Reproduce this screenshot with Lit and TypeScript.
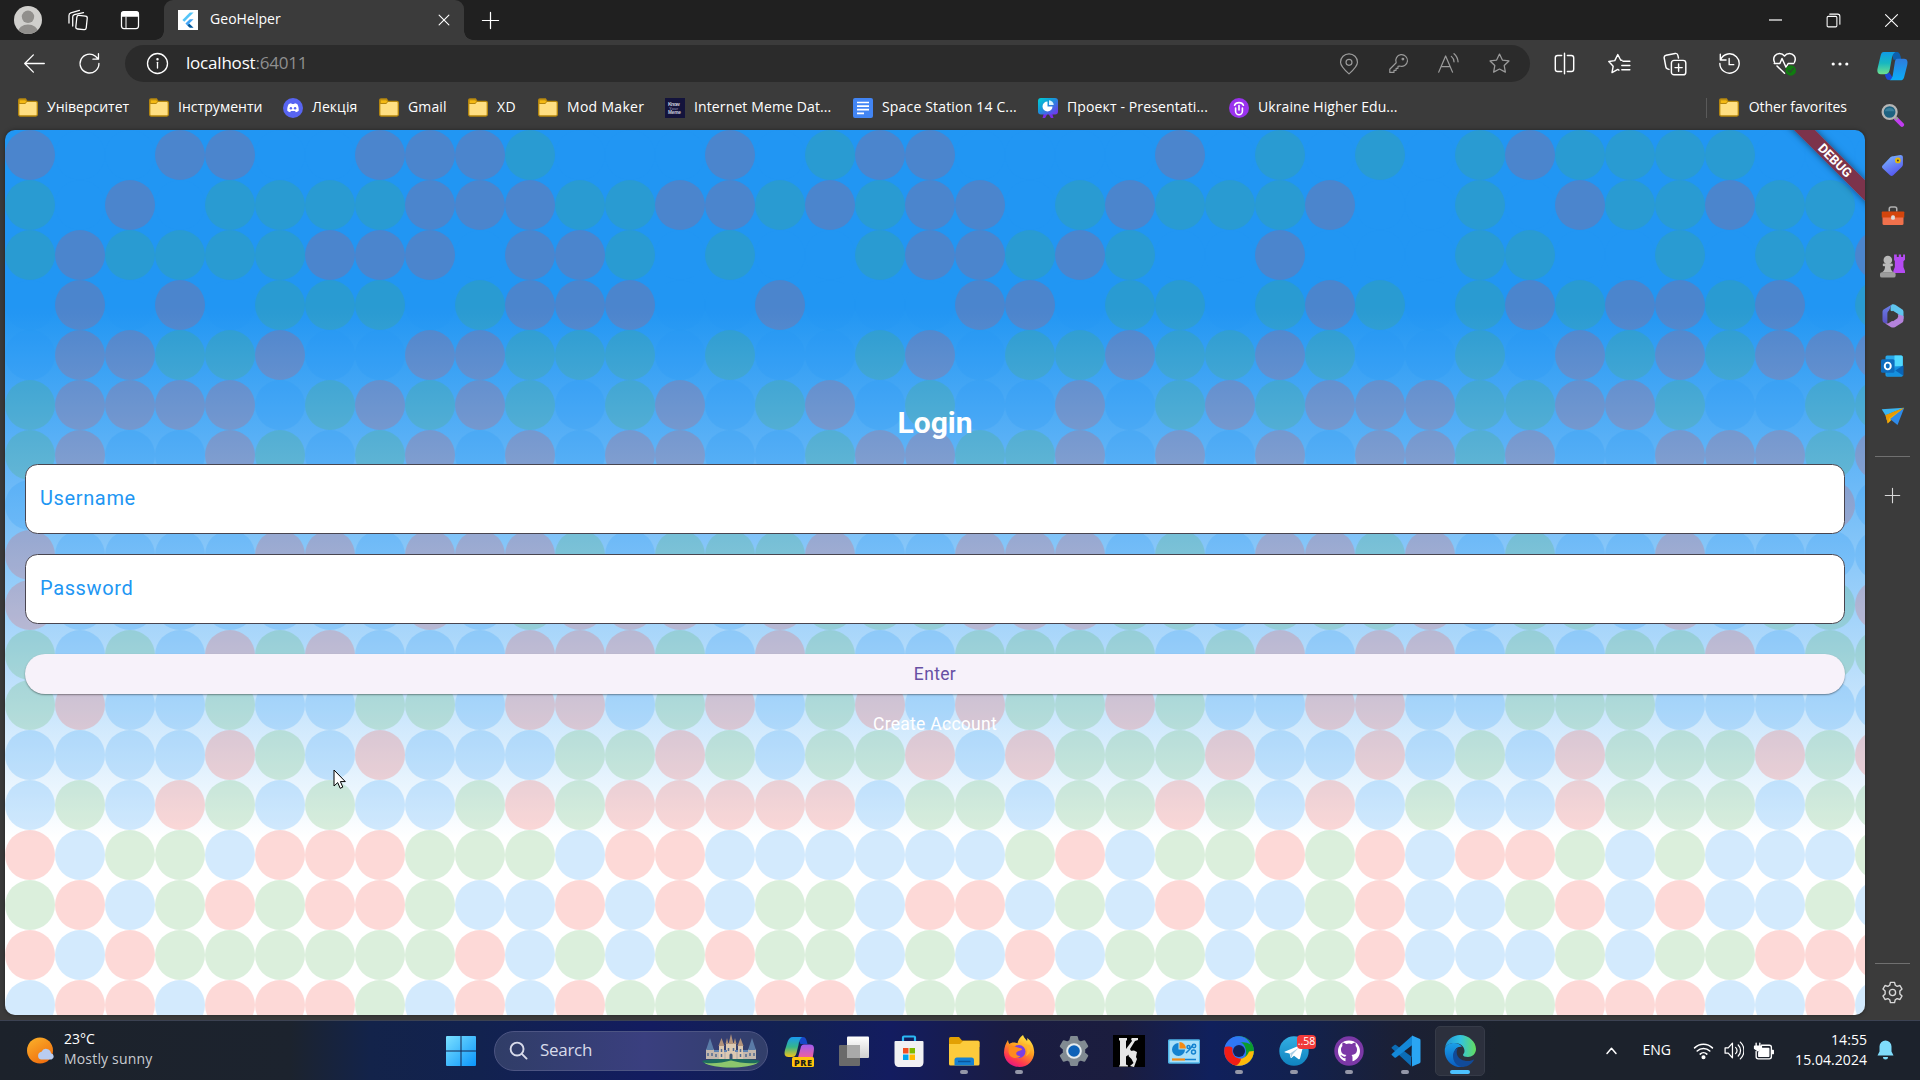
import { LitElement, html, css, svg, TemplateResult } from "lit";
import { customElement, property } from "lit/decorators.js";
import { classMap } from "lit/directives/class-map.js";

/* ---------- background dots: one character per circle ---------- */
const DOTS: string[] = [
  "RBBRRBBRRRGBBBRBGRR" + "BBBBRBGBGBGRGGGGBBB",
  "GBRBGGGGRRRGGRRGRGR" + "RBGRGGGRBBGBRGGRGGB",
  "GRGGGGRRRBRRGBGBBGR" + "RGRGBBRBBBGGBBGBGGR",
  "BRBRBGGGBGRRRBBRBBB" + "RRBGGBGRGBGRGRRGRBG",
  "BRRGGRBBRRGGGBGBBGR" + "BGGRGGRGBBGBRGRGRRR",
  "GRRRRBGRGRGBGRBGRBG" + "BBRBGRGRRRGGRRGBBGG",
  "GRBBRGBGRBRBRRBBGRR" + "GGRBRBRBRRGRBBRRRGR",
  "BBBBBBBBBBBBBBBBBBB" + "BBBBBBBBBBBBBBBBBRB",
  "RBBBBRRBRRRGBGGGRBB" + "RRRBGBRRGRBGBBRBBBB",
  "RBBBBBBBRBGRRRBRGGG" + "RRRGGBGGGRBGGBRBGGR",
  "GBGBRGRBBBRRRGBRGBB" + "GGGGBGRBRRBGBGGRBGG",
  "GRBBGBBGGBRRBGRBGRB" + "RGGRGBBRRBBGGGBBBBB",
  "BBBBRGBRBBBGGRGBGGR" + "BRGGGRBBRBGBRGGGRGR",
  "BGBRGBGBBGRGRRRRRBG" + "GBGGRGBRBGBBRGGGBGG",
  "RBGGBRRRGGGBRRBBBBB" + "BGRBGGRGRBRRGBGBBBG",
  "GRBGRGRRGBBRBRBGGBR" + "RBGBRBBGRBBGRBRBBGB",
  "RBRGGGGGGRBGBGRGGBG" + "BRBGGBGGRBBBGBGGRRR",
  "BRRBRRRGBRBRGGBRRBG" + "GRGGBRGGRGGGRRRBBRB",
];

/* ---------- icons ---------- */
const line = (size: number, body: TemplateResult, w = 1.1) => html`<svg
  width=${size} height=${size} viewBox="0 0 20 20" fill="none"
  stroke="currentColor" stroke-width=${w} stroke-linecap="round" stroke-linejoin="round">${body}</svg>`;
const art = (size: number, body: TemplateResult) => html`<svg
  width=${size} height=${size} viewBox="0 0 32 32">${body}</svg>`;

const STAR = "M10 1.8l2.5 5.2 5.7.8-4.1 4 1 5.7-5.1-2.7-5.1 2.7 1-5.7-4.1-4 5.700-.8z";
const GEAR = "M8.2 1.2h3.6l.6 2.5 1.6.9 2.5-.7 1.8 3.1-1.9 1.8v2.4l1.9 1.8-1.8 3.1-2.5-.7-1.6.9-.6 2.5H8.2l-.6-2.5-1.6-.9-2.5.7-1.8-3.1 1.9-1.8V8.8L1.7 7l1.8-3.1 2.5.7 1.6-.9z";

const folder = html`<svg width="20" height="20" viewBox="0 0 20 20">
  <path d="M.7 2.300a1.300 1.300 0 0 1 1.300-1.300h5.500l1.500 2.300H17.800a1.500 1.500 0 0 1 1.500 1.500v11.700a1.500 1.500 0 0 1-1.500 1.500H2.200a1.500 1.500 0 0 1-1.500-1.500z" fill="#ffdf82" stroke="#b5860d" stroke-width="1.300"/>
  <path d="M1.200 1.800h6.300l1.200 1.700-1.400 2H1.200z" fill="#f5b914" stroke="#b5860d" stroke-width="1"/></svg>`;
const discord = html`<svg width="20" height="20" viewBox="0 0 20 20"><circle cx="10" cy="10" r="10" fill="#5865f2"/>
  <path d="M5.600 6.300c1-.7 1.900-.9 2.700-1l.4.700h2.600l.4-.7c.8.100 1.700.3 2.700 1 1 1.900 1.500 4 1.300 6.500-.9.700-1.900 1.200-2.900 1.400l-.7-1.100H7.900l-.7 1.100c-1-.2-2-.7-2.900-1.400-.2-2.500.3-4.600 1.300-6.500z" fill="#fff"/>
  <circle cx="7.900" cy="10.200" r="1.200" fill="#5865f2"/><circle cx="12.100" cy="10.200" r="1.200" fill="#5865f2"/></svg>`;
const meme = html`<svg width="20" height="20" viewBox="0 0 20 20"><rect width="20" height="20" fill="#13133c"/>
  <g fill="#c9c9dc" font-family="Liberation Sans" font-weight="700" font-size="5.200"><text x="3" y="7.500" textLength="12">Know</text><text x="4" y="11.800" fill="#77779a" font-size="4">Your</text><text x="3" y="16" textLength="13" font-size="4.800">Meme</text></g></svg>`;
const docs = html`<svg width="20" height="20" viewBox="0 0 20 20"><rect width="20" height="20" rx="2" fill="#4285f4"/>
  <path d="M4 4.500h12M4 8.100h12M4 11.700h12M4 15.300h7" stroke="#fff" stroke-width="1.700"/></svg>`;
const pres = html`<svg width="20" height="20" viewBox="0 0 20 20"><defs><linearGradient id="p" x1="0" y1="0" x2="1" y2="1"><stop offset="0" stop-color="#00d0d6"/><stop offset=".4" stop-color="#1599d8"/><stop offset="1" stop-color="#7b2cf0"/></linearGradient></defs>
  <path d="M6 15l-1.500 5h2.600L10 15l2.900 5h2.600L14 15z" fill="#7a2be8"/><rect width="20" height="16.500" rx="3" fill="url(#p)"/>
  <path d="M9.500 3.500a5 5 0 1 0 5 5h-5z" fill="#fff"/><path d="M11 2.200v4.800h4.700A4.800 4.800 0 0 0 11 2.200z" fill="#d8f4ff"/></svg>`;
const ukr = html`<svg width="20" height="20" viewBox="0 0 20 20"><circle cx="10" cy="10" r="10" fill="#9a32ee"/>
  <path d="M6.600 10v3.300a3.400 3.400 0 0 0 6.800 0V10" stroke="#fff" stroke-width="1.600" fill="none" stroke-linecap="round"/><path d="M5.600 7.200a4.600 3.600 0 0 1 8.800 0M10 7.500v4.500" stroke="#fff" stroke-width="1.600" fill="none" stroke-linecap="round"/></svg>`;
const flutter = html`<svg width="20" height="20" viewBox="0 0 20 20"><rect width="20" height="20" fill="#fff"/>
  <path d="M11.800 2.500h3.800L6.300 11.800 4.400 9.900z" fill="#54c5f8"/><path d="M11.800 9.200h3.800L11.200 13.500l-1.900 1.900-1.900-1.900z" fill="#42a5f5"/><path d="M9.300 15.400l1.900-1.900 4.400 4.300h-3.800z" fill="#01579b"/></svg>`;

const avatar = html`<svg width="28" height="28" viewBox="0 0 28 28"><defs><clipPath id="av"><circle cx="14" cy="14" r="14"/></clipPath></defs>
  <g clip-path="url(#av)"><rect width="28" height="28" fill="#d0cfcc"/><circle cx="14" cy="10.800" r="6.200" fill="#918f8c"/><ellipse cx="14" cy="26" rx="10" ry="7.500" fill="#918f8c"/></g></svg>`;
const workspaces = line(22, svg`<rect x="8.500" y="6" width="9.500" height="12.500" rx="1.800" transform="rotate(6 13 12)"/><path d="M5.200 15.500V7.200a2.200 2.200 0 0 1 1.500-2.100L15 3.200M1.800 12.800V6A2.400 2.400 0 0 1 3.500 3.600l7.800-2.300"/>`, 1.15);
const tabMenu = line(20, svg`<rect x="1.500" y="1.500" width="17" height="17" rx="2.500"/><path d="M2 3a1 1 0 0 1 1-1h14a1 1 0 0 1 1 1v3H2z" fill="currentColor"/><path d="M6 7v11" stroke-width="1"/>`, 1.25);
const closeX = (s: number, w = 1.6) => line(s, svg`<path d="M3 3l14 14M17 3L3 17"/>`, w);
const plus = (s: number) => line(s, svg`<path d="M10 1.500v17M1.500 10h17"/>`, 1.3);
const back = line(23, svg`<path d="M18.500 10H1.800M9 2.500L1.500 10 9 17.500"/>`, 1.15);
const reload = line(23, svg`<path d="M18.200 10a8.200 8.200 0 1 1-3-6.300L17.600 6M17.800 1.500V6.200H13"/>`, 1.15);
const info = line(23, svg`<circle cx="10" cy="10" r="8.700"/><path d="M10 9v5"/><circle cx="10" cy="6.300" r=".5" fill="currentColor"/>`, 1.15);
const pin = line(22, svg`<path d="M10 19c-4.500-4-7.700-7-7.700-10.600a7.700 7.700 0 0 1 15.400 0C17.700 12 14.500 15 10 19z"/><circle cx="10" cy="8.500" r="2.700"/>`);
const key = line(21, svg`<path d="M7.800 9.300A5.600 5.600 0 1 1 11 12.400l-1.500.2v2H7.700v1.900H5.700V18.500H1.700v-3z"/><circle cx="14.200" cy="5.800" r=".8"/>`);
const readAloud = line(23, svg`<path d="M1.500 17.500L7.500 3.500l6 14M3.700 12.800h7.600M12.500 3.800a6.500 6.500 0 0 1 2.300 4.700M14.800 1.500a10 10 0 0 1 3.500 7"/>`);
const star = line(23, svg`<path d=${STAR}/>`);
const split = line(23, svg`<path d="M7.500 3H4a2 2 0 0 0-2 2v10a2 2 0 0 0 2 2h3.500M12.500 3H16a2 2 0 0 1 2 2v10a2 2 0 0 1-2 2h-3.500M10 1v18"/>`, 1.25);
const favList = line(23, svg`<path d="M9.500 15.800l-1-.6-5 2.700 1-5.600L.7 8.300l5.200-.8 2.600-5.300 2.600 5h1M13 8h6M12 11.700h7M12 15.400h7"/>`, 1.25);
const collections = line(24, svg`<rect x="7" y="7" width="12" height="12" rx="2.200"/><path d="M13 10v6M10 13h6M5 14.500L3.700 14a2 2 0 0 1-1.300-1.500L1 5a2 2 0 0 1 1.600-2.300l7.500-1.500a2 2 0 0 1 2.300 1.600L12.900 5"/>`, 1.2);
const history = line(23, svg`<path d="M2 2v5h5M2.300 6.600A8.400 8.400 0 1 1 1.600 10M9.700 5.700v5.300h4"/>`, 1.2);
const health = line(25, svg`<path d="M2 9C0 4.500 3.500 2 6 2s4 2 4 2 1.500-2 4-2 6 2.500 4 7M1.800 10h4.500L8 6l3.200 7 1.700-3h4.500M4 12l6 5.800"/><circle cx="15" cy="15.500" r="4.200" fill="#107c10" stroke="none"/><path d="M13 15.500l1.500 1.500 2.600-3" stroke="#2c4d2c"/>`, 1.2);
const dots = html`<svg width="18" height="6" viewBox="0 0 18 6" fill="#fff"><circle cx="2.200" cy="3" r="1.600"/><circle cx="9" cy="3" r="1.600"/><circle cx="15.800" cy="3" r="1.600"/></svg>`;
const minimize = html`<svg width="13" height="2" viewBox="0 0 13 2"><rect width="13" height="1.200" y=".4" fill="#fff"/></svg>`;
const restore = line(15, svg`<rect x="1.500" y="4.500" width="13" height="14" rx="1.500"/><path d="M5 1.500h10.500a3 3 0 0 1 3 3V15"/>`, 1.4);

const copilotBody = svg`<defs><linearGradient id="c1" x1="0" y1="0" x2="0" y2="1"><stop offset="0" stop-color="#0f9be8"/><stop offset=".5" stop-color="#17b7c0"/><stop offset="1" stop-color="#6fe08e"/></linearGradient><linearGradient id="c2" x1="0" y1="0" x2="0" y2="1"><stop offset="0" stop-color="#2f7bdc"/><stop offset="1" stop-color="#0aaef8"/></linearGradient></defs>
  <path d="M15 2h5c3 0 3.500 2 4.500 5l.5 3h-8z" fill="#0d5fae"/><path d="M7 2h12c-2 1-3 3-3.800 7L13 21c-.8 3-2 4-4 4H4c-3.500 0-4.200-3-3.300-6.500L3.700 6c.8-3 1.500-4 3.300-4z" fill="url(#c1)"/>
  <path d="M8 25c2 0 3.500-.5 4.500-2l5 7.500-2 .5h-3c-2.500 0-3.500-2-4.500-6z" fill="#1b49d6"/><path d="M21 9h7c3.500 0 4 3 3.200 6.500L28 28c-.8 2.500-2 3.300-4 3.300H13c2-1 3-3 3.500-6.500L18.500 12c.5-2 1-3 2.500-3z" fill="url(#c2)"/>`;

const sideIcons: TemplateResult[] = [
  art(24, svg`<path d="M20 21l8 8" stroke="#c13cf0" stroke-width="5.500" stroke-linecap="round"/><path d="M17 17l5 5" stroke="#999" stroke-width="4"/><circle cx="11.500" cy="12" r="9.300" fill="#1e6281" stroke="#b5b5b5" stroke-width="3"/><path d="M5 11a7 7 0 0 1 13 0z" fill="#3a7f9c"/>`),
  art(23, svg`<defs><linearGradient id="t" x1="0" y1="0" x2=".5" y2="1"><stop offset="0" stop-color="#7fc0ff"/><stop offset="1" stop-color="#5558f0"/></linearGradient></defs><path d="M17 3l10-1.500c2 0 3.500 1 3.500 3.500v9c0 2-.5 3-2 4.500L17 29.500c-1.500 1.500-3 1.500-4.500 0L2.500 20c-1.500-1.500-1.500-3 0-4.500L13 4.500C14.500 3.300 15.500 3.200 17 3z" fill="url(#t)"/><circle cx="23.500" cy="9" r="2.700" fill="#3b3b3b" stroke="#e5b80b" stroke-width="2.600"/>`),
  art(24, svg`<path d="M11 10V6.500C11 5 12 4 13.500 4h5C20 4 21 5 21 6.500V10" fill="none" stroke="#b0b0b0" stroke-width="2"/><path d="M2 14h28v12a2 2 0 0 1-2 2H4a2 2 0 0 1-2-2z" fill="#f0714c"/><path d="M2 10h28a1 1 0 0 1 1 1v7H1v-7a1 1 0 0 1 1-1z" fill="#d4450c"/><rect x="13.500" y="15" width="5" height="6" rx="2" fill="#ddd"/>`),
  art(25, svg`<path d="M18 2h3.500v3H24V2h3v3h2.500V2h2.500v6.500l-2 2V18l2 5v2.500H17V23l2-5v-7.500l-1-2z" fill="#b44bf2"/><g fill="#b8b8b8"><circle cx="10" cy="9" r="5.500"/><rect x="3.500" y="13.500" width="13" height="3.500" rx="1.500"/><path d="M6.500 15h7c0 6 1 7.500 4 10H2.500c3-2.500 4-4 4-10z"/></g><rect x="0" y="24.500" width="20" height="7" rx="2.500" fill="#9c9c9c"/>`),
  art(24, svg`<defs><linearGradient id="m" x1="0" y1="0" x2="0" y2="1"><stop offset="0" stop-color="#6a80e8"/><stop offset="1" stop-color="#5b4dc0"/></linearGradient></defs><path d="M14 1L4 7C2.500 8 2 9 2 11v10c0 2 .5 3 2 4l5 2c-1-2-.5-3-.5-5V13c0-2 .8-3 2-4z" fill="url(#m)"/><path d="M14 1c2-1 3-.8 5 0l9 6c1.500 1 2 2 2 4v9l-8-7-9-4c-.5-3-.5-5 1-8z" fill="#5fc5ee"/><path d="M30 16v5c0 2-.5 3-2 4l-9 5.500c-2 1-4 1-6 0L5 25.500c2 1 4 .8 6-.5l11-7c1.500-1 1-3 0-4.500z" fill="#b583dc"/><path d="M10.500 12.500l5.500-3.500 6 4v6l-6 4-5.500-3.500z" fill="#3b3b3b"/>`),
  art(24, svg`<rect x="6" y="2" width="23" height="28" rx="2" fill="#28a8ea"/><path d="M18 2h9a2 2 0 0 1 2 2v12H18z" fill="#50d9ff"/><path d="M7 20l22-4v12a2 2 0 0 1-2 2H9a2 2 0 0 1-2-2z" fill="#1490df"/><path d="M30 15v14l-11-7z" fill="#0a63b5"/><rect x="0" y="7" width="18" height="18" rx="2" fill="#0f6cbd"/><ellipse cx="9" cy="16" rx="4" ry="4.500" fill="none" stroke="#fff" stroke-width="2.600"/>`),
  art(24, svg`<path d="M1 7L31 5 6 15z" fill="#3bb5f0"/><path d="M6 15L31 5 9 26z" fill="#f8b40a"/><path d="M12 20L31 5 22 28z" fill="#2f8bea"/><path d="M6 15l25-10-20 14-2 7z" fill="#e79a06"/>`),
];

/* ---------- taskbar applications ---------- */
const winLogo = html`<svg width="30" height="30" viewBox="0 0 30 30"><defs><linearGradient id="w" x1="0" y1="0" x2="1" y2="1"><stop offset="0" stop-color="#7be0ff"/><stop offset="1" stop-color="#0a95fb"/></linearGradient></defs><path d="M1 0h13.500v14.500H0V1a1 1 0 0 1 1-1zM15.500 0H29a1 1 0 0 1 1 1v13.500H15.500zM0 15.500h14.500V30H1a1 1 0 0 1-1-1zM15.500 15.500H30V29a1 1 0 0 1-1 1H15.500z" fill="url(#w)"/></svg>`;
const castle = html`<svg width="58" height="34" viewBox="0 0 58 34">
  <path d="M0 27c6-3 52-3 58 0-2 4-16 6.500-29 6.500S2 31 0 27z" fill="#1d6a5f"/><path d="M2 28.500c8 2 19 0 27-2 8 2 19 4 27 2-4 3.500-16 5-27 5S6 32 2 28.500z" fill="#8cc66d"/>
  <path d="M4 15h8v10H4zM46 15h8v10h-8zM12 17h34v8H12z" fill="#c4b8ae"/><path d="M17 11h5v14h-5zM36 11h5v14h-5zM24 9h10v16H24z" fill="#dcc9b2"/>
  <path d="M8 4l4 12H4zM50 4l4 12h-8z" fill="#5a7ba6"/><path d="M19.500 4l3 8h-6zM38.500 4l3 8h-6zM29 0l2.500 10h-5zM25 4l1.500 6h-3zM33 4l1.500 6h-3z" fill="#b3937c"/>
  <path d="M12 17h5M22 17h3M33 17h3M41 17h5" stroke="#5f83b2" stroke-width="2"/><path d="M6 19v3M10 19v3M14 20v3M19.500 15v3M19.500 20v3M26.500 14v3M31.500 14v3M38.500 15v3M38.500 20v3M44 20v3M48 19v3M52 19v3" stroke="#536b90" stroke-width="1.500"/><path d="M27.500 25v-4a1.500 1.500 0 0 1 3 0v4z" fill="#3e5677"/></svg>`;
const search = (s: number) => line(s, svg`<circle cx="8.500" cy="8.500" r="6.800"/><path d="M13.500 13.500l5 5"/>`, 2);

interface App { icon: TemplateResult; run?: boolean; active?: boolean; badge?: string; }
const APPS: App[] = [
  { icon: art(32, svg`<defs><linearGradient id="k1" x1="0" y1="0" x2="0" y2="1"><stop offset="0" stop-color="#1a9af0"/><stop offset=".5" stop-color="#35b58b"/><stop offset="1" stop-color="#f5c518"/></linearGradient><linearGradient id="k2" x1="0" y1="0" x2="0" y2="1"><stop offset="0" stop-color="#a05cf0"/><stop offset="1" stop-color="#f0609a"/></linearGradient></defs>
    <path d="M14 2h6c3 0 3.500 3 4.500 7h-7z" fill="#1748c8"/><path d="M10 2h9c-2 2-3 4-3.500 8l-2 8c-1 3-2 4-4.500 4H5.500c-4 0-4.500-3-3.500-7L4.500 7c1-3 2.500-5 5.500-5z" fill="url(#k1)"/><path d="M21 9.500h6c4 0 4.500 3 3.700 7l-1 6H15l2.500-9c.6-3 1.500-4 3.500-4z" fill="url(#k2)"/>
    <rect x="9" y="22" width="22" height="10" rx="1.500" fill="#ffc40c"/><text x="11" y="30.500" font-family="Open Sans" font-weight="800" font-size="9" textLength="18" fill="#1c1c1c">PRE</text>`) },
  { icon: art(32, svg`<defs><linearGradient id="v1" x1="0" y1="0" x2="0" y2="1"><stop offset="0" stop-color="#fff"/><stop offset="1" stop-color="#cfcfcf"/></linearGradient></defs><rect x="1" y="10" width="21" height="21" rx="1" fill="#6a6a6a"/><rect x="9" y="1.500" width="22" height="21.500" rx="1" fill="url(#v1)"/><rect x="9" y="10" width="13" height="13" fill="#a9a9a9"/>`) },
  { icon: art(32, svg`<path d="M10 8V2.500A1 1 0 0 1 11 1.500h10a1 1 0 0 1 1 1V8" stroke="#2ab8f5" stroke-width="2.200" fill="none"/><path d="M2.500 6h27a1 1 0 0 1 1 1v20c0 3-1.500 5-5 5h-19c-3.500 0-5-2-5-5V7a1 1 0 0 1 1-1z" fill="#f1f1f3"/><path fill="#f25022" d="M10 13h5.500v5.500H10z"/><path fill="#7fba00" d="M16.500 13H22v5.500h-5.500z"/><path fill="#00a4ef" d="M10 19.500h5.500V25H10z"/><path fill="#ffb900" d="M16.500 19.500H22V25h-5.500z"/>`) },
  { run: true, icon: art(32, svg`<path d="M1 3.500A1.500 1.500 0 0 1 2.500 2H11l3 3.500h16A1.500 1.500 0 0 1 31.500 7v5H1z" fill="#e2a003"/><path d="M1 9h11l3-3h15a1.500 1.500 0 0 1 1.500 1.500V29A1.500 1.500 0 0 1 30 30.500H2.500A1.500 1.500 0 0 1 1 29z" fill="#fccb3c"/><path d="M6.500 30.500V25a2.500 2.500 0 0 1 2.500-2.500h14.500A2.500 2.500 0 0 1 26 25v5.500z" fill="#1580d2"/><path d="M10 26.500h12.500" stroke="#0a559b" stroke-width="1.500"/>`) },
  { run: true, icon: art(32, svg`<defs><linearGradient id="f1" x1=".8" y1="0" x2=".3" y2="1"><stop offset="0" stop-color="#fff04a"/><stop offset=".45" stop-color="#ff9a1f"/><stop offset=".8" stop-color="#ff3750"/><stop offset="1" stop-color="#e31587"/></linearGradient></defs>
    <path d="M20 0c1 3 3 4 4 6 .5-1 .3-2 .2-3 4 3 7 8 7 14.500C31 26 24.500 32 16.500 32S1 26 1 17.500C1 12 3 8 5 5c.2 2 .8 3 1.500 4 1-1 2.500-1.500 4-1.500 1.500 0 3 .3 4 .8C15 5 17 2 20 0z" fill="url(#f1)"/><circle cx="16" cy="16.500" r="6.500" fill="#7b3fe4"/><path d="M6 11c4-1 6 .5 9 1.500 2 .7 4 .5 4 2-1 1.500-4 1-5.500 3-1 2 1 4 4 3.500-4 4-12 2-12-5z" fill="#ff8a1e"/><path d="M19 9c5 1 7 6 4 12 3-1 6-6 4-11z" fill="#ffb52e"/>`) },
  { icon: art(32, svg`<g transform="scale(1.6)"><path d=${GEAR} fill="#818b92" stroke="#818b92" stroke-width="1.200" stroke-linejoin="round"/></g><circle cx="16" cy="16" r="7.800" fill="#e4ebee"/><circle cx="16" cy="16" r="5.800" fill="#0d62b8"/>`) },
  { icon: art(32, svg`<rect width="32" height="32" fill="#000"/><path d="M6 3h8v2l-1 1v8l6-8-1-2 1-1h6v2l-3 1-5 8 1.500 3-2.500 2.500-3 2v8l2 1v1H6l1-2V6L6 5zM17 16l4-.5 3 1.500-1 5 1 2-3 8-4-1 3.500-3-2-4-3-3z" fill="#e6e6e6"/>`) },
  { icon: art(32, svg`<rect x=".7" y="5" width="31" height="23" rx="1" fill="#a8e0fa" stroke="#4db3e6" stroke-width="1.500"/><path d="M10.500 8a6.500 6.500 0 1 0 6.500 6.500h-6.500z" fill="#1583d0"/><path d="M11.500 7v6.500H18A6.500 6.500 0 0 0 11.500 7z" fill="#f48a14"/><path d="M18 18l4-4 3-4" stroke="#1583d0" stroke-width="1.500" fill="none"/><g fill="none" stroke="#1583d0" stroke-width="1.500"><circle cx="26" cy="11" r="1.700"/><circle cx="20.500" cy="12" r="1.500"/><circle cx="25.500" cy="17" r="2"/></g><path d="M4 24.500h13" stroke="#f48a14" stroke-width="2.200"/><path d="M17 24.500h11" stroke="#1583d0" stroke-width="1.500"/>`) },
  { run: true, icon: art(32, svg`<circle cx="16" cy="16" r="14.800" fill="#2f74f2"/><path d="M13 1.500A14.800 14.800 0 0 1 27 26c-3 1-6 .5-7-1 4-4 4-10 1-15C18 6 14 6 9 8z" fill="#0b9c2c"/><path d="M30.800 16c0 8-6.500 14.800-14.800 14.800-3 0-5-.8-7-1.800 0-3 1-5 2.500-6.500 5 3 12 1 14.500-6z" fill="#fdb90a"/><path d="M1.200 16c0 7 5 13.500 12 14.600 3-1.500 4.500-4 4.800-7-5.500.5-9.500-3.500-8.500-10.500C6 9 3 10 1.800 12z" fill="#f11d16"/><path d="M1.800 12C4 5 10 0 18 1.500c5 1 8 4 9.500 8-5-3-11-3.500-15 1-3 2-6 .5-10.700 1.500z" fill="#2f78f5"/><circle cx="16" cy="16" r="6" fill="#10215a"/>`) },
  { run: true, badge: "..58", icon: art(32, svg`<defs><linearGradient id="tg" x1="0" y1="0" x2="0" y2="1"><stop offset="0" stop-color="#33aee2"/><stop offset="1" stop-color="#0f83bf"/></linearGradient></defs><circle cx="16" cy="16" r="14.700" fill="url(#tg)"/><path d="M7 16.500L24 9.500c1-.4 1.500 0 1.300 1L22 23.500c-.2.900-1 1-1.700.5l-4.300-3.300-2.300 2.100c-.5.400-1 .3-1.100-.3l-1-4-4.500-1c-.8-.3-.8-.7-.1-1z" fill="#fff"/><path d="M12 18.500l9-6-6.500 7-.8 3.300z" fill="#a9cfe5"/>`) },
  { run: true, icon: art(32, svg`<circle cx="16" cy="16" r="14.700" fill="#7b38a6"/><path d="M16 5.500c-6.500 0-11 4.800-11 10.500 0 5 3 8.800 7.500 10.300v-3.200c-3 .5-3.500-2-5-2.700 2-.5 2.700 1.800 5 1.200.2-.7.500-1.200 1-1.500-3.600-.5-5.500-2-5.500-5.500 0-1.500.5-2.800 1.400-3.700-.3-1-.2-2.300.3-3.400 1.300 0 2.600.8 3.500 1.500a10 10 0 0 1 5.600 0c.9-.7 2.200-1.500 3.500-1.500.5 1.100.6 2.400.3 3.400.9.900 1.400 2.200 1.400 3.700 0 3.500-1.900 5-5.500 5.500.7.600 1 1.500 1 2.500v3.700C24 24.800 27 21 27 16c0-5.700-4.500-10.500-11-10.500z" fill="#fff"/>`) },
  { run: true, icon: art(32, svg`<path d="M23 1l-1 30-19-17.500c-.6-.5-.6-1 0-1.600L5.500 10c.5-.4 1-.4 1.500 0L23 22z" fill="#0c6cb5"/><path d="M23 1L3 18.700c-.6.500-.6 1 0 1.600L5.500 22.500c.5.400 1 .4 1.500 0L24 9.500z" fill="#1488d8"/><path d="M23 .5l7.500 3.300c.8.400 1 .8 1 1.700v21c0 .9-.2 1.300-1 1.700L23 31.500z" fill="#2aa5f3"/>`) },
  { run: true, active: true, icon: art(32, svg`<defs><linearGradient id="e1" x1="0" y1=".5" x2="1" y2=".5"><stop offset="0" stop-color="#2196d8"/><stop offset=".5" stop-color="#33c3e0"/><stop offset="1" stop-color="#64dc5c"/></linearGradient><linearGradient id="e2" x1="0" y1="0" x2="0" y2="1"><stop offset="0" stop-color="#1aa0e8"/><stop offset="1" stop-color="#0a5cc0"/></linearGradient></defs>
    <path d="M1 13C2 5 9 0 16 0c9 0 16 7 16 14 0 5-4 8-8 8-3 0-5-1-5-2 0-1 1.500-1.500 1.500-4C20.500 12 17 8 11 8 6 8 2 10 1 13z" fill="url(#e1)"/><path d="M1 13c2-4 6-5 9-5 4 0 7 2 8 4-6-1-8 4-8 8 0 6 4 11 10 12C9 34-1 25 1 13z" fill="url(#e2)"/><path d="M14 13c-3 4-1 13 10 13 2.500 0 4-.8 5-1.300.6-.3 1 .3.700.8C27 30 22 32 18 32c-6-1-9-6-9-11 0-4 2-7 5-8z" fill="#114a98"/>`) },
];

/* ---------- data ---------- */
interface Mark { icon: TemplateResult; label: string; w: number; ls: number; }
const MARKS: Mark[] = [
  { icon: folder, label: "Університет", w: 131, ls: 0 },
  { icon: folder, label: "Інструменти", w: 134, ls: 0.04 },
  { icon: discord, label: "Лекція", w: 96, ls: 0.05 },
  { icon: folder, label: "Gmail", w: 89, ls: 0.15 },
  { icon: folder, label: "XD", w: 70, ls: 0.4 },
  { icon: folder, label: "Mod Maker", w: 127, ls: 0.3 },
  { icon: meme, label: "Internet Meme Dat...", w: 188, ls: 0.12 },
  { icon: docs, label: "Space Station 14 C...", w: 185, ls: 0.17 },
  { icon: pres, label: "Проект - Presentati...", w: 191, ls: 0.13 },
  { icon: ukr, label: "Ukraine Higher Edu...", w: 180, ls: 0.08 },
];

@customElement("dot-pattern")
class DotPattern extends LitElement {
  static styles = css`
    :host { display: block; overflow: hidden; }
    .grid { display: grid; grid-template-columns: repeat(38, 50px); grid-auto-rows: 50px; }
    .dot { border-radius: 50%; opacity: 0.2; }
    .r { background: #f44336; }
    .g { background: #4caf50; }
    .b { background: #2196f3; }
  `;
  render() {
    return html`<div class="grid">
      ${DOTS.map((row) => [...row].map((c) => html`<div class=${classMap({ dot: true, [c.toLowerCase()]: true })}></div>`))}
    </div>`;
  }
}

@customElement("browser-head")
class BrowserHead extends LitElement {
  static styles = css`
    :host { display: block; color: #fff; font: 14px/20px "Open Sans", "Noto Sans", sans-serif; }
    svg { display: block; flex: none; }
    .tabs { display: flex; height: 40px; background: #202020; align-items: center; }
    .lead { display: flex; align-items: center; width: 164px; box-sizing: border-box; padding-left: 14px; }
    .lead .ws { margin: 0 31px 0 25px; }
    .tab { position: relative; display: flex; align-items: center; width: 300px; height: 40px; background: #3b3b3b; border-radius: 9px 9px 0 0; padding: 0 13px 0 14px; box-sizing: border-box; }
    .tab::before, .tab::after { content: ""; position: absolute; bottom: 0; width: 9px; height: 9px; }
    .tab::before { left: -9px; background: radial-gradient(circle at 0 0, #202020 8.5px, #3b3b3b 9px); }
    .tab::after { right: -9px; background: radial-gradient(circle at 100% 0, #202020 8.5px, #3b3b3b 9px); }
    .title { flex: 1; padding: 0 0 2px 12px; letter-spacing: 0.05px; }
    .newtab { padding-left: 17px; flex: 1; }
    .win { display: flex; align-items: center; }
    .win > div { width: 58px; display: flex; justify-content: center; }
    .bar { display: flex; align-items: center; height: 47px; padding-left: 23px; }
    .bar .re { margin: 0 24px 0 32px; }
    .addr { display: flex; align-items: center; width: 1405px; height: 37px; border-radius: 19px; background: #2b2b2b; padding: 0 19px 0 21px; box-sizing: border-box; }
    .url { flex: 1; padding: 0 0 2px 17px; font-size: 17px; letter-spacing: -0.2px; }
    .port { color: #8f8f8f; }
    .in { display: flex; gap: 28px; color: #9b9b9b; align-items: center; }
    .tools { display: flex; flex: 1; padding-left: 7px; }
    .tools > div { width: 55px; display: flex; justify-content: center; align-items: center; }
    .marks { display: flex; align-items: center; height: 43px; padding: 0 0 2px 18px; box-sizing: border-box; }
    .mark { display: flex; align-items: center; gap: 9px; white-space: nowrap; }
    .mark span, .other span { padding-bottom: 2px; }
    .grow { flex: 1; }
    .other { display: flex; align-items: center; gap: 10px; border-left: 1px solid #5a5a5a; height: 20px; padding-left: 12px; margin-right: 73px; }
  `;
  render() {
    return html`
      <div class="tabs">
        <div class="lead">${avatar}<div class="ws">${workspaces}</div>${tabMenu}</div>
        <div class="tab">${flutter}<span class="title">GeoHelper</span>${closeX(14)}</div>
        <div class="newtab">${plus(19)}</div>
        <div class="win"><div>${minimize}</div><div>${restore}</div><div>${closeX(17, 1.3)}</div></div>
      </div>
      <div class="bar">
        ${back}<div class="re">${reload}</div>
        <div class="addr">${info}<span class="url">localhost<span class="port">:64011</span></span>
          <div class="in">${pin}${key}${readAloud}${star}</div></div>
        <div class="tools">${[split, favList, collections, history, health, dots].map((i) => html`<div>${i}</div>`)}</div>
      </div>
      <div class="marks">
        ${MARKS.map((m) => html`<div class="mark" style="width:${m.w}px;letter-spacing:${m.ls}px">${m.icon}<span>${m.label}</span></div>`)}
        <div class="grow"></div>
        <div class="other">${folder}<span>Other favorites</span></div>
      </div>`;
  }
}

@customElement("edge-sidebar")
class EdgeSidebar extends LitElement {
  static styles = css`
    :host { display: flex; flex-direction: column; align-items: center; color: #d8d8d8; }
    svg { display: block; }
    .cell { height: 50.2px; display: flex; align-items: center; justify-content: center; }
    .rule { width: 35px; height: 1px; background: #707070; }
    .r1 { margin-top: 14px; }
    .add { margin-top: 30px; }
    .grow { flex: 1; }
    .gear { height: 56px; display: flex; align-items: center; }
  `;
  render() {
    return html`
      <div class="cell">${art(31, copilotBody)}</div>
      ${sideIcons.map((i) => html`<div class="cell">${i}</div>`)}
      <div class="rule r1"></div>
      <div class="add">${plus(17)}</div>
      <div class="grow"></div>
      <div class="rule"></div>
      <div class="gear">${line(23, svg`<path d=${GEAR}/><circle cx="10" cy="10" r="2.700"/>`, 1.2)}</div>`;
  }
}

@customElement("login-page")
class LoginPage extends LitElement {
  @property() heading = "Login";
  static styles = css`
    :host { display: grid; position: relative; overflow: hidden; border-radius: 10px; font-family: Roboto, sans-serif;
      background: linear-gradient(#2196f3 20%, #fff 80%); box-shadow: 0 0 4px rgba(0, 0, 0, 0.4); }
    dot-pattern, .form { grid-area: 1 / 1; min-width: 0; min-height: 0; }
    .form { z-index: 1; display: flex; flex-direction: column; align-items: stretch; padding: 273px 20px 0; }
    .h { color: #fff; font-weight: 700; font-size: 30px; line-height: 40px; text-align: center; }
    .field { height: 70px; box-sizing: border-box; border: 1.25px solid #49454f; border-radius: 12.5px; background: #fff; color: #2196f3;
      font-size: 20px; letter-spacing: 0.63px; line-height: 66px; padding-left: 14px; }
    .f1 { margin-top: 21px; }
    .f2 { margin-top: 20px; }
    .enter { margin-top: 30px; height: 40px; border-radius: 20px; background: #f7f2fa; color: #6750a4; text-align: center; line-height: 40px;
      font-weight: 400; font-size: 17.5px; letter-spacing: 0.35px; box-shadow: 0 1px 2px rgba(0, 0, 0, 0.3), 0 1px 1px rgba(0, 0, 0, 0.12); }
    .create { color: #fff; font-weight: 400; font-size: 17.5px; letter-spacing: 0.28px; text-align: center; margin-top: 19px; line-height: 22px; }
    .ribbon { position: absolute; z-index: 2; left: 1770px; top: 22.5px; width: 120px; height: 15px; transform: rotate(45deg);
      background: rgba(132, 42, 61, 0.92); box-shadow: 0 0 7px rgba(0, 0, 0, 0.5); color: #fff; font-weight: 700; font-size: 13px; line-height: 15px; text-align: center; }
    .pointer { position: absolute; z-index: 3; left: 328px; top: 639px; }
  `;
  render() {
    return html`
      <dot-pattern></dot-pattern>
      <div class="form">
        <div class="h">${this.heading}</div>
        <div class="field f1">Username</div>
        <div class="field f2">Password</div>
        <div class="enter">Enter</div>
        <div class="create">Create Account</div>
      </div>
      <div class="ribbon">DEBUG</div>
      <svg class="pointer" width="14" height="21" viewBox="0 0 14 21"><path d="M1 1v16l3.700-3.400 2.500 5.700 2.600-1.200-2.400-5.500h4.900z" fill="#fff" stroke="#000" stroke-width="1"/></svg>`;
  }
}

@customElement("task-bar")
class TaskBar extends LitElement {
  static styles = css`
    :host { display: flex; align-items: center; height: 60px; box-sizing: border-box; border-top: 1px solid #3c4252; color: #fff;
      font: 14px/20px "Open Sans", "Noto Sans", sans-serif;
      background: linear-gradient(90deg, #1c222b 0, #1c232e 290px, #13234a 370px, #12224f 480px, #131c60 650px, #122252 790px, #131c60 890px, #1a1c42 1010px, #1b1d3e 1120px, #10205c 1210px, #12214e 1300px, #1b2035 1400px, #1c222c 1500px, #1c222c); }
    svg { display: block; flex: none; }
    .weather { display: flex; align-items: center; width: 446px; padding-left: 27px; box-sizing: border-box; gap: 9px; }
    .text { padding-bottom: 3px; }
    .sub { color: #c9ccd1; letter-spacing: 0.18px; }
    .search { display: flex; align-items: center; box-sizing: border-box; margin: 0 3.5px 0 18px; width: 274px; height: 40px; border-radius: 20px; padding: 0 7px 0 14px;
      background: linear-gradient(90deg, #303d67, #3a3f7f 55%, #323f6a); border: 1px solid #4d5583; color: #d8dbea; font-size: 17px; }
    .search span { flex: 1; padding: 0 0 2px 12px; letter-spacing: -0.3px; }
    .app { position: relative; width: 55.05px; height: 59px; display: flex; align-items: center; justify-content: center; }
    .plate { width: 50px; height: 50px; box-sizing: border-box; display: flex; align-items: center; justify-content: center; border-radius: 5px; }
    .active .plate { background: #2c303d; border: 1px solid #363b48; }
    .run::after { content: ""; position: absolute; bottom: 6px; width: 8px; height: 4px; border-radius: 2px; background: #9497a8; }
    .active::after { width: 20px; background: #4cc2ff; }
    .badge { position: absolute; top: 14px; left: 30px; width: 19px; height: 14px; border-radius: 4px; background: #f03a3a; font-size: 10.5px; line-height: 13px; text-align: center; }
    .grow { flex: 1; }
    .tray { display: flex; align-items: center; padding-bottom: 1px; }
    .lang { margin: 0 22px 0 24px; padding-bottom: 1px; letter-spacing: 0; }
    .net { display: flex; align-items: center; gap: 9px; }
    .clock { text-align: right; width: 84px; padding-bottom: 1px; letter-spacing: 0.05px; margin: 0 10px 0 9px; }
    .bell { margin-right: 26px; }
  `;
  render() {
    return html`
      <div class="weather">
        <svg width="28" height="28" viewBox="0 0 28 28"><defs><linearGradient id="s" x1="0" y1="0" x2=".6" y2="1"><stop offset="0" stop-color="#fbb32b"/><stop offset="1" stop-color="#f0700f"/></linearGradient></defs><circle cx="13" cy="13.500" r="13" fill="url(#s)"/><path d="M14 22.500a4 4 0 0 1 .5-7.800 5 5 0 0 1 9.500 1.600 3.200 3.200 0 0 1 .5 6.200z" fill="#b9ccf0"/></svg>
        <div class="text"><div>23°C</div><div class="sub">Mostly sunny</div></div>
      </div>
      ${winLogo}
      <div class="search">${search(19)}<span>Search</span>${castle}</div>
      ${APPS.map((a) => html`<div class=${classMap({ app: true, run: !!a.run, active: !!a.active })}><div class="plate">${a.icon}</div>${a.badge ? html`<div class="badge">${a.badge}</div>` : ""}</div>`)}
      <div class="grow"></div>
      <div class="tray">
        ${line(15, svg`<path d="M4 14l6-7 6 7"/>`, 2)}
        <div class="lang">ENG</div>
        <div class="net">
          ${line(21, svg`<path d="M1.500 7.500a12 12 0 0 1 17 0M4 10.500a8.500 8.500 0 0 1 12 0M6.800 13.400a4.600 4.600 0 0 1 6.400 0"/><circle cx="10" cy="16.500" r="1.200" fill="currentColor"/>`, 1.5)}
          ${line(21, svg`<path d="M2 7.500h3l4-4.500v14l-4-4.500H2zM12 7a4 4 0 0 1 0 6M14.500 4.700a7.500 7.500 0 0 1 0 10.600M16.500 2a11 11 0 0 1 0 16"/>`, 1.2)}
          ${line(21, svg`<path d="M8 5h7.500a2 2 0 0 1 2 2v9a2 2 0 0 1-2 2H5a2 2 0 0 1-2-2v-5"/><path d="M8.500 8h6.500v7.500H5.500V12z" fill="currentColor"/><path d="M18 10h1.300v3H18M3 3v3M6.500 3v3M1.500 6h6.500v2L5 10.500 1.500 8z" fill="currentColor"/>`, 1.3)}
        </div>
        <div class="clock"><div>14:55</div><div>15.04.2024</div></div>
        <div class="bell"><svg width="17" height="20" viewBox="0 0 17 20"><path d="M8.500.5a6 6 0 0 1 6 6v5l2 4H.5l2-4v-5a6 6 0 0 1 6-6zM6 17h5a2.500 2.500 0 0 1-5 0z" fill="#7fdcfb"/></svg></div>
      </div>`;
  }
}

@customElement("app-root")
class AppRoot extends LitElement {
  static styles = css`
    :host { display: flex; flex-direction: column; width: 1920px; height: 1080px; overflow: hidden; background: #3b3b3b; }
    .window { display: grid; flex: 1; grid-template-columns: 1865px 55px; grid-template-rows: 130px 885px; }
    browser-head { grid-area: 1 / 1 / 2 / 3; }
    login-page { grid-area: 2 / 1; margin-left: 5px; }
    edge-sidebar { grid-area: 1 / 2 / 3 / 3; margin-top: 40px; margin-bottom: -5px; z-index: 1; }
  `;
  render() {
    return html`
      <div class="window">
        <browser-head></browser-head>
        <login-page></login-page>
        <edge-sidebar></edge-sidebar>
      </div>
      <task-bar></task-bar>`;
  }
}
